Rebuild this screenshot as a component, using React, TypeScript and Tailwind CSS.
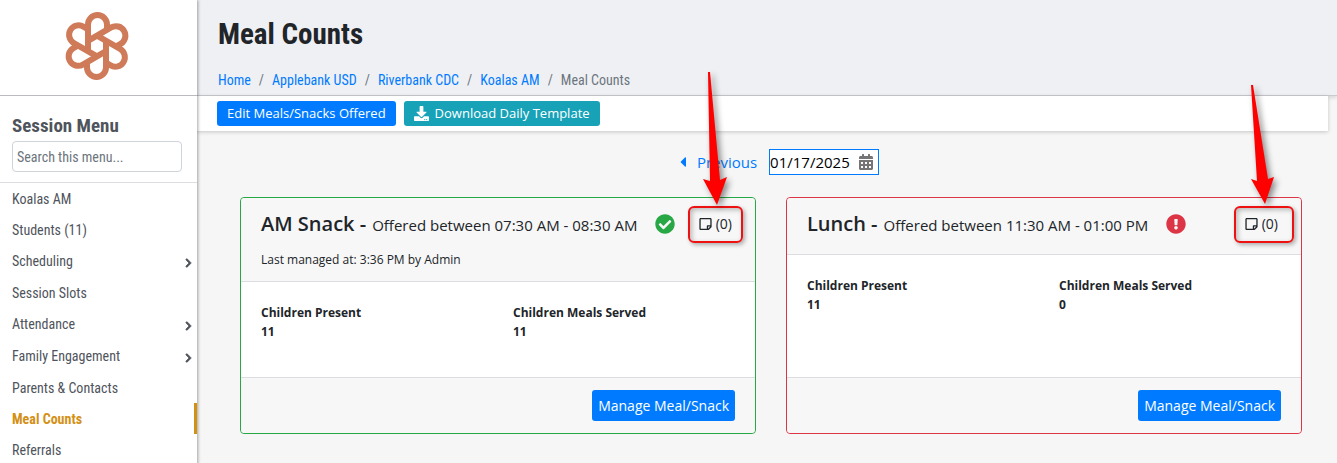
import React, { useState } from 'react';
import {
  FaCalendarAlt,
  FaCaretLeft,
  FaCheckCircle,
  FaChevronRight,
  FaDownload,
  FaExclamationCircle,
  FaRegStickyNote,
} from 'react-icons/fa';

interface MenuItem {
  label: string;
  hasChildren?: boolean;
  active?: boolean;
}

interface Meal {
  name: string;
  offered: string;
  complete: boolean;
  lastManaged?: string;
  present: number;
  served: number;
}

const menuItems: MenuItem[] = [
  { label: 'Koalas AM' },
  { label: 'Students (11)' },
  { label: 'Scheduling', hasChildren: true },
  { label: 'Session Slots' },
  { label: 'Attendance', hasChildren: true },
  { label: 'Family Engagement', hasChildren: true },
  { label: 'Parents & Contacts' },
  { label: 'Meal Counts', active: true },
  { label: 'Referrals' },
];

const crumbs = ['Home', 'Applebank USD', 'Riverbank CDC', 'Koalas AM'];

const meals: Meal[] = [
  {
    name: 'AM Snack',
    offered: 'Offered between 07:30 AM - 08:30 AM',
    complete: true,
    lastManaged: 'Last managed at: 3:36 PM by Admin',
    present: 11,
    served: 11,
  },
  {
    name: 'Lunch',
    offered: 'Offered between 11:30 AM - 01:00 PM',
    complete: false,
    present: 11,
    served: 0,
  },
];

const condensed = "font-['Roboto_Condensed','Liberation_Sans_Narrow',sans-serif]";

const Logo: React.FC = () => (
  <svg viewBox="-36 -36 72 72" className="h-[72px] w-[72px]" fill="none" stroke="#cf7a58" strokeWidth="6" strokeLinejoin="round">
    {[0, 60, 120, 180, 240, 300].map((angle) => (
      <path key={angle} transform={`rotate(${angle})`} d="M-9 5.2V-21.5A9.5 9.5 0 0 1 10 -21.5V-16" />
    ))}
  </svg>
);

const Sidebar: React.FC = () => {
  const [search, setSearch] = useState('');

  return (
    <aside className={`${condensed} relative z-10 w-[197px] shrink-0 bg-white text-[#4f545c] shadow-[1px_0_3px_rgba(0,0,0,0.35)]`}>
      <div className="flex h-24 items-center justify-center border-b border-[#b9bbc0] pr-1 pb-1">
        <Logo />
      </div>
      <div className="border-b border-[#dcdde0] px-3 pt-4 pb-2.5">
        <h2 className="text-[19px] leading-7 font-bold">
          <label htmlFor="menu-search">Session Menu</label>
        </h2>
        <input
          id="menu-search"
          type="text"
          placeholder="Search this menu..."
          value={search}
          onChange={(e) => setSearch(e.target.value)}
          className="mt-px block h-[31px] w-[170px] rounded border border-[#ced4da] px-1 text-sm placeholder:text-[#6c757d]"
        />
      </div>
      <nav>
        {menuItems.map((item) => (
          <a
            key={item.label}
            href="#"
            className={`flex items-center justify-between pl-3 text-sm ${item.hasChildren ? 'h-8 pr-1' : 'h-[31px]'} ${
              item.active ? 'border-r-3 border-[#d39015] font-bold text-[#d39015]' : ''
            }`}
          >
            {item.label}
            {item.hasChildren && (
              <FaChevronRight className="mt-1 h-[10px] w-[9px] overflow-visible" stroke="currentColor" strokeWidth="40" />
            )}
          </a>
        ))}
      </nav>
    </aside>
  );
};

// Red pointer drawn over the page, its tip resting on the notes box
const Arrow: React.FC<{ points: string }> = ({ points }) => (
  <svg
    viewBox="0 0 30 136"
    className="pointer-events-none absolute -top-[128px] right-[23px] z-20 h-[136px] w-[30px] overflow-visible drop-shadow-[3px_3px_3px_rgba(0,0,0,0.45)]"
  >
    <polygon points={points} fill="#ff0000" />
  </svg>
);

const MealCard: React.FC<{ meal: Meal }> = ({ meal }) => (
  <section className={`relative flex flex-col rounded border bg-white ${meal.complete ? 'border-[#28a745]' : 'border-[#dc3545]'}`}>
    <header className="rounded-t border-b border-[#dcdde0] bg-[#f7f7f7] px-5 pt-2.5 pb-3.5">
      <div className="flex h-8 items-center">
        <h3 className="flex items-baseline gap-1.5 whitespace-nowrap">
          <span className="text-xl font-semibold">{meal.name} -</span>
          <span className="text-[15px]">{meal.offered}</span>
        </h3>
        {meal.complete ? (
          <FaCheckCircle className="ml-[18px] h-5 w-5 shrink-0 text-[#28a745]" />
        ) : (
          <FaExclamationCircle className="ml-[18px] h-5 w-5 shrink-0 text-[#dc3545]" />
        )}
        <button type="button" className="mr-[3px] ml-auto flex items-center gap-1 text-sm">
          <FaRegStickyNote className="h-[14px] w-[13px]" />
          (0)
        </button>
      </div>
      {meal.lastManaged && <p className="mt-3 text-[12px] leading-[15px]">{meal.lastManaged}</p>}
    </header>
    <dl className="grid grow grid-cols-2 gap-x-[30px] px-5 pt-[21px] text-[12px] leading-[19px] font-bold">
      <div>
        <dt>Children Present</dt>
        <dd>{meal.present}</dd>
      </div>
      <div>
        <dt>Children Meals Served</dt>
        <dd>{meal.served}</dd>
      </div>
    </dl>
    <footer className="flex justify-end rounded-b border-t border-[#dcdde0] bg-[#f7f7f7] px-5 py-3">
      <button type="button" className="h-[31px] rounded-[3px] bg-[#007bff] px-1.5 text-sm text-white">
        Manage Meal/Snack
      </button>
    </footer>
    <div
      className={`pointer-events-none absolute top-2 h-[37px] rounded-md border-2 border-[#ee1111] shadow-[2px_2px_4px_rgba(0,0,0,0.3),inset_2px_2px_5px_rgba(0,0,0,0.25)] ${
        meal.complete ? 'right-3 w-[55px]' : 'right-[7px] w-[60px]'
      }`}
    />
    <Arrow
      points={meal.complete ? '6,2 8,2 18,110 25,107 15,135 1,109 8,111' : '3,15 5,15 20,109 26,107 17,134 3,109 9,111'}
    />
  </section>
);

const App: React.FC = () => {
  const [date, setDate] = useState('01/17/2025');

  return (
    <div className="flex min-h-screen bg-[#f6f6f6] font-['Open_Sans',sans-serif] text-[#212529]">
      <Sidebar />
      <main className="min-w-0 grow">
        <header className={`${condensed} h-24 border-b border-[#c9cbd0] bg-[#eff0f4] pt-4 pl-[21px] shadow-[0_2px_4px_rgba(0,0,0,0.12)]`}>
          <h1 className="text-[29px] leading-9 font-bold">Meal Counts</h1>
          <nav aria-label="Breadcrumb" className="mt-[18px]">
            <ol className="flex text-sm leading-5">
              {crumbs.map((crumb) => (
                <li key={crumb} className="flex">
                  <a href="#" className="text-[#007bff]">{crumb}</a>
                  <span className="px-2 text-[#6c757d]">/</span>
                </li>
              ))}
              <li className="text-[#6c757d]">Meal Counts</li>
            </ol>
          </nav>
        </header>
        <div className="relative mr-[9px] flex h-[35px] items-start gap-2 bg-white pt-[5px] pl-5 shadow-[0_1px_4px_rgba(0,0,0,0.2)]">
          <button type="button" className="h-[25px] rounded-[3px] bg-[#007bff] px-2.5 text-[13px] text-white">
            Edit Meals/Snacks Offered
          </button>
          <button type="button" className="flex h-[25px] items-center gap-1.5 rounded-[3px] bg-[#17a2b8] px-2.5 text-[13px] text-white">
            <FaDownload className="h-[15px] w-[15px]" />
            Download Daily Template
          </button>
        </div>

        <div className="pt-[18px] pr-[35px] pb-[29px] pl-[43px]">
          <div className="flex h-[26px] items-center justify-center gap-3 pl-4">
            <a href="#" className="flex items-center gap-2.5 text-[15px] text-[#007bff]">
              <FaCaretLeft className="h-4 w-2" />
              Previous
            </a>
            <div className="relative w-[110px]">
              <input
                type="text"
                aria-label="Date"
                value={date}
                onChange={(e) => setDate(e.target.value)}
                className="block h-[26px] w-full border border-[#007bff] bg-white text-[15px] text-black"
              />
              <FaCalendarAlt className="pointer-events-none absolute top-[5px] right-[5px] h-4 w-4 text-[#757575]" />
            </div>
          </div>
          <div className="mt-[22px] grid min-h-[237px] grid-cols-2 gap-[30px]">
            {meals.map((meal) => (
              <MealCard key={meal.name} meal={meal} />
            ))}
          </div>
        </div>
      </main>
    </div>
  );
};

export default App;
